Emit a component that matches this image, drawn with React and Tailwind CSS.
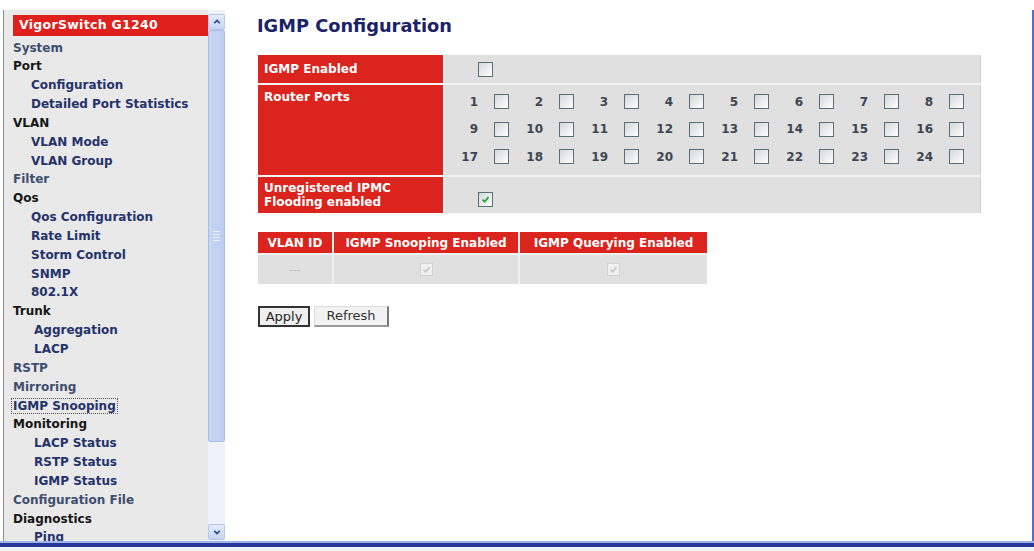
import React from "react";

const MENU = [
  ["System", 0, "link"],
  ["Port", 0, "folder"],
  ["Configuration", 1],
  ["Detailed Port Statistics", 1],
  ["VLAN", 0, "folder"],
  ["VLAN Mode", 1],
  ["VLAN Group", 1],
  ["Filter", 0, "link"],
  ["Qos", 0, "folder"],
  ["Qos Configuration", 1],
  ["Rate Limit", 1],
  ["Storm Control", 1],
  ["SNMP", 1],
  ["802.1X", 1],
  ["Trunk", 0, "folder"],
  ["Aggregation", 2],
  ["LACP", 2],
  ["RSTP", 0, "link"],
  ["Mirroring", 0, "link"],
  ["IGMP Snooping", 0, "active"],
  ["Monitoring", 0, "folder"],
  ["LACP Status", 2],
  ["RSTP Status", 2],
  ["IGMP Status", 2],
  ["Configuration File", 0, "link"],
  ["Diagnostics", 0, "folder"],
  ["Ping", 2],
];

function Check({ color }) {
  return (
    <svg viewBox="0 0 10 10" className="w-[9px] h-[9px]">
      <path d="M1.6 5.2 L4 7.6 L8.4 2.4" stroke={color} strokeWidth="1.9" fill="none" />
    </svg>
  );
}

function Box({ checked = false, disabled = false }) {
  if (disabled) {
    return (
      <span className="inline-flex w-[13px] h-[13px] border border-[#d2d2d2] bg-[#f0f0f0] items-center justify-center">
        {checked && <Check color="#c8c8c8" />}
      </span>
    );
  }
  return (
    <span className="inline-flex w-[15px] h-[15px] border border-[#5d6e79] bg-linear-to-br from-[#d3d8d8] to-white items-center justify-center">
      {checked && <Check color="#22a22a" />}
    </span>
  );
}

function MenuItem({ label, level, kind }) {
  const pad = level === 0 ? "pl-[9px]" : level === 1 ? "pl-[27px]" : "pl-[30px]";
  let color = "text-[#24336a]";
  if (kind === "folder") color = "text-[#161616]";
  if (kind === "link") color = "text-[#3f4e6e]";
  return (
    <div className={`h-[18.85px] leading-[18.85px] whitespace-nowrap ${pad}`}>
      <span
        className={`${color} ${
          kind === "active" ? "outline outline-1 outline-dotted outline-[#555] px-[1px] -ml-[1px]" : ""
        }`}
      >
        {label}
      </span>
    </div>
  );
}

function Sidebar() {
  return (
    <div className="flex w-[221px] shrink-0">
      <div className="w-[204px] bg-[#e9e9e9] pt-[5px] text-[12px] font-bold">
        <div className="ml-[9px] h-[21px] bg-[#e0201c] text-white flex items-center pl-[6px] text-[12.5px] tracking-[0.3px]">
          VigorSwitch G1240
        </div>
        <div className="pt-[2.5px]">
          {MENU.map(([label, level, kind]) => (
            <MenuItem key={label} label={label} level={level} kind={kind} />
          ))}
        </div>
      </div>
      {/* scrollbar */}
      <div className="w-[17px] flex flex-col pt-[4px] pb-[1px] bg-[#eef2fa]">
        <div className="h-[16px] bg-linear-to-b from-[#e4ecfb] to-[#c6d5f3] border border-[#b7c8ec] rounded-[2px] flex items-center justify-center">
          <svg viewBox="0 0 10 10" className="w-[8px] h-[8px]">
            <path d="M1.5 6.5 L5 3 L8.5 6.5" stroke="#2b3f8a" strokeWidth="2" fill="none" />
          </svg>
        </div>
        <div className="h-[412px] bg-linear-to-r from-[#c8d6f4] to-[#bccdf1] border border-[#aabde8] rounded-[2px] flex items-center justify-center">
          <div className="flex flex-col gap-[2px]">
            <div className="w-[7px] h-[1px] bg-[#e8eefb]" />
            <div className="w-[7px] h-[1px] bg-[#e8eefb]" />
            <div className="w-[7px] h-[1px] bg-[#e8eefb]" />
            <div className="w-[7px] h-[1px] bg-[#e8eefb]" />
          </div>
        </div>
        <div className="flex-1" />
        <div className="h-[16px] bg-linear-to-b from-[#e4ecfb] to-[#c6d5f3] border border-[#b7c8ec] rounded-[2px] flex items-center justify-center">
          <svg viewBox="0 0 10 10" className="w-[8px] h-[8px]">
            <path d="M1.5 3.5 L5 7 L8.5 3.5" stroke="#2b3f8a" strokeWidth="2" fill="none" />
          </svg>
        </div>
      </div>
    </div>
  );
}

function LabelCell({ children, className = "" }) {
  return (
    <div className={`w-[185px] shrink-0 bg-[#da241d] text-white font-bold text-[12px] leading-[14px] pl-[6px] ${className}`}>
      {children}
    </div>
  );
}

function Main() {
  const rows = [
    [1, 2, 3, 4, 5, 6, 7, 8],
    [9, 10, 11, 12, 13, 14, 15, 16],
    [17, 18, 19, 20, 21, 22, 23, 24],
  ];
  return (
    <div className="flex-1 bg-white pl-[33px] pt-[1px]">
      <h1 className="text-[#1b2268] font-bold text-[17.8px] leading-[30px] -ml-[1px]">
        IGMP Configuration
      </h1>

      {/* settings table */}
      <div className="mt-[14px] w-[723px] flex flex-col gap-[2px] bg-[#f3f3f3]">
        <div className="flex gap-[2px] h-[28px]">
          <LabelCell className="flex items-center">IGMP Enabled</LabelCell>
          <div className="flex-1 bg-[#e0e0e0] flex items-center pl-[33px] border-r border-[#cfcfcf]">
            <Box />
          </div>
        </div>
        <div className="flex gap-[2px] h-[90px]">
          <LabelCell className="pt-[5px]">Router Ports</LabelCell>
          <div className="flex-1 bg-[#e0e0e0] pt-[3px] border-r border-[#cfcfcf]">
            {rows.map((r, i) => (
              <div key={i} className="flex h-[27.5px] items-center">
                {r.map((n) => (
                  <div key={n} className="w-[65px] flex items-center">
                    <span className="w-[33px] text-right font-bold text-[12px] text-[#3d4553]">{n}</span>
                    <span className="ml-[16px] flex">
                      <Box />
                    </span>
                  </div>
                ))}
              </div>
            ))}
          </div>
        </div>
        <div className="flex gap-[2px] h-[36px]">
          <LabelCell className="flex flex-col justify-center">
            <span>Unregistered IPMC</span>
            <span>Flooding enabled</span>
          </LabelCell>
          <div className="flex-1 bg-[#e0e0e0] flex items-center pl-[33px] pt-[8px] border-r border-[#cfcfcf]">
            <Box checked />
          </div>
        </div>
      </div>

      {/* VLAN table */}
      <div className="mt-[19px] w-[449px] flex flex-col gap-[2px] bg-[#f0f0f0] text-[12px] font-bold">
        <div className="grid grid-cols-[74px_184px_187px] gap-[2px] h-[21px]">
          <div className="bg-[#da241d] text-white flex items-center justify-center">VLAN ID</div>
          <div className="bg-[#da241d] text-white flex items-center justify-center">IGMP Snooping Enabled</div>
          <div className="bg-[#da241d] text-white flex items-center justify-center">IGMP Querying Enabled</div>
        </div>
        <div className="grid grid-cols-[74px_184px_187px] gap-[2px] h-[29px]">
          <div className="bg-[#e0e0e0] text-[#b8b8b8] font-normal text-[10px] flex items-center justify-center">---</div>
          <div className="bg-[#e0e0e0] flex items-center justify-center">
            <Box checked disabled />
          </div>
          <div className="bg-[#e0e0e0] flex items-center justify-center">
            <Box checked disabled />
          </div>
        </div>
      </div>

      {/* actions */}
      <div className="mt-[22px] flex gap-[4px] text-[13px] text-[#222]">
        <button className="h-[21px] w-[52px] border-2 border-[#333] bg-[#efefef] flex items-center justify-center">
          Apply
        </button>
        <button className="h-[21px] w-[75px] border border-[#dcdcdc] border-r-2 border-b-2 border-r-[#777] border-b-[#999] bg-[#f2f2f2] flex items-center justify-center text-[#333]">
          Refresh
        </button>
      </div>
    </div>
  );
}

export default function App() {
  return (
    <div className="w-[1034px] h-[551px] bg-white flex flex-col overflow-hidden font-['DejaVu_Sans',sans-serif]">
      <div className="h-[10px] shrink-0" />
      <div className="h-[531px] flex ml-[3px] border-l border-[#8c8c8c] border-r-2 border-r-[#4f6fd6]">
        <Sidebar />
        <Main />
      </div>
      <div className="h-[2px] bg-[#9fb5e8] shrink-0" />
      <div className="h-[4px] bg-[#27389a] shrink-0" />
      <div className="flex-1 bg-[#eef3fc]" />
    </div>
  );
}
